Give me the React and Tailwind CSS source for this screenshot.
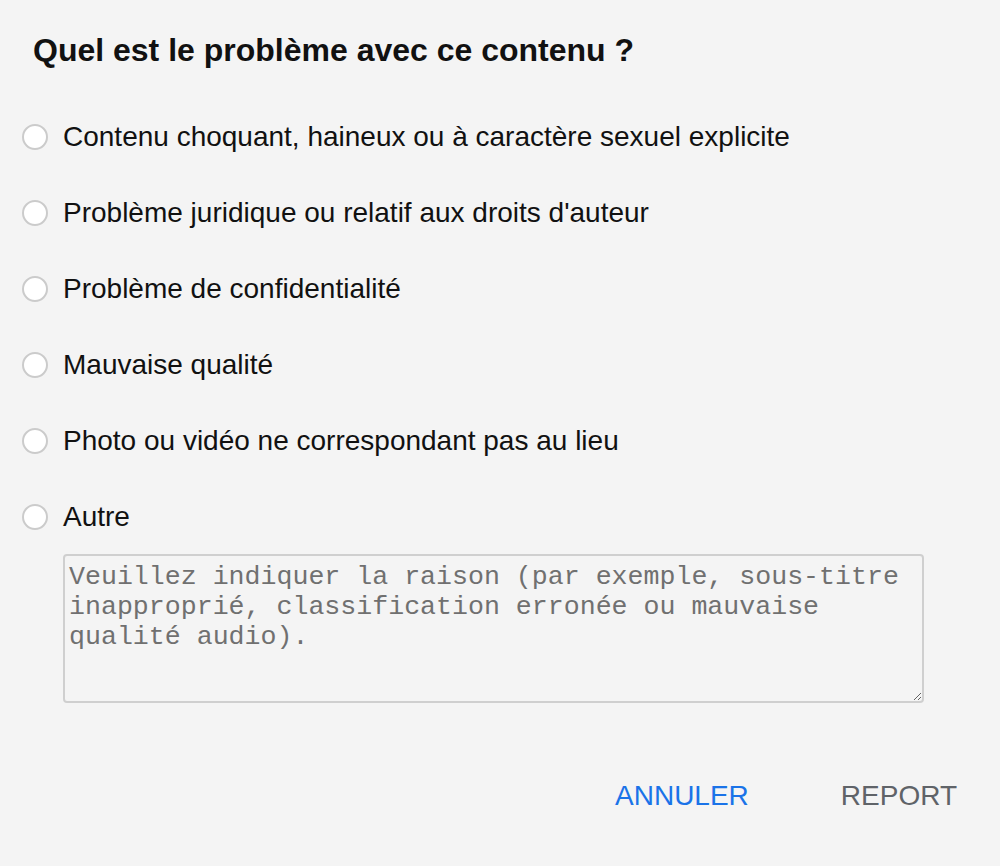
import { useState } from 'react'

const options = [
  'Contenu choquant, haineux ou à caractère sexuel explicite',
  "Problème juridique ou relatif aux droits d'auteur",
  'Problème de confidentialité',
  'Mauvaise qualité',
  'Photo ou vidéo ne correspondant pas au lieu',
  'Autre',
]

export default function App() {
  const [picked, setPicked] = useState(null)

  return (
    <div className="w-[1000px] h-[866px] bg-[#f4f4f4] font-['Liberation_Sans',Arial,sans-serif] text-[#111] overflow-hidden">
      <h1 className="pl-[33px] pt-[32px] text-[32px] leading-[36px] font-bold">Quel est le problème avec ce contenu ?</h1>

      <div className="mt-[54px] flex flex-col gap-[46px] pl-[22px]">
        {options.map((o, i) => (
          <label key={o} className="flex items-center h-[30px] cursor-pointer" onClick={() => setPicked(i)}>
            <span className={`w-[26px] h-[26px] rounded-full border-2 bg-white flex-shrink-0 ${picked === i ? 'border-[#1a73e8]' : 'border-[#cbcbcb]'}`} />
            <span className="ml-[15px] text-[28px] leading-[30px]">{o}</span>
          </label>
        ))}
      </div>

      <div className="pl-[63px] pr-[76px] mt-[22px]">
        <textarea
          placeholder="Veuillez indiquer la raison (par exemple, sous-titre inapproprié, classification erronée ou mauvaise qualité audio)."
          className="block w-full h-[149px] bg-[#f4f4f4] border-2 border-[#cfcfcf] rounded-[4px] px-[4px] pt-[6px] pb-[3px] font-['Liberation_Mono','Courier_New',monospace] text-[26.6px] leading-[30px] placeholder-[#707070] resize-y"
        />
      </div>

      <div className="flex justify-end items-center gap-[92px] pr-[43px] mt-[77px] text-[28px] leading-[32px]">
        <button className="text-[#1a73e8]">ANNULER</button>
        <button className="text-[#5f6368]">REPORT</button>
      </div>
    </div>
  )
}
